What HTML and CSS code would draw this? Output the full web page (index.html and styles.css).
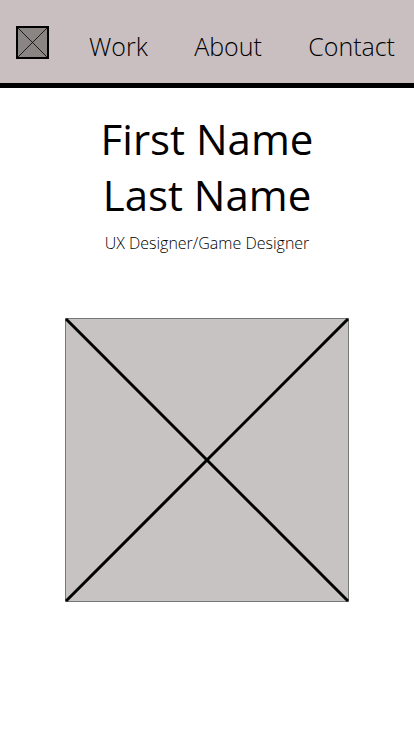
FILE: index.html
```html
<!DOCTYPE html>
<html lang="en">
<head>
  <meta charset="UTF-8">
  <meta name="viewport" content="width=device-width, initial-scale=1.0">
  <title>Portfolio</title>
  <link rel="stylesheet" href="styles.css">
</head>
<body>

<header class="top-bar">
  <a href="#" class="logo">
    <svg width="33" height="33" viewBox="0 0 33 33">
      <rect x="1" y="1" width="31" height="31" fill="#8a8482" stroke="#000" stroke-width="2"/>
      <line x1="2" y1="2" x2="31" y2="31" stroke="#000" stroke-width="0.8"/>
      <line x1="31" y1="2" x2="2" y2="31" stroke="#000" stroke-width="0.8"/>
    </svg>
  </a>
  <nav class="nav-links">
    <a href="#">Work</a>
    <a href="#">About</a>
    <a href="#">Contact</a>
  </nav>
</header>

<main class="intro">
  <h1 class="name">First Name<br>Last Name</h1>
  <p class="role">UX Designer/Game Designer</p>

  <div class="photo">
    <svg width="284" height="284" viewBox="0 0 284 284">
      <rect x="0.5" y="0.5" width="283" height="283" fill="#c8c3c3" stroke="#777" stroke-width="1"/>
      <line x1="1" y1="1" x2="283" y2="283" stroke="#000" stroke-width="3"/>
      <line x1="283" y1="1" x2="1" y2="283" stroke="#000" stroke-width="3"/>
    </svg>
  </div>
</main>

</body>
</html>
```

FILE: styles.css
```css
body {
  font-family: "Open Sans", "Noto Sans", sans-serif;
  background-color: #ffffff;
  color: #000;
  margin: 0;
  padding: 0;
}
.top-bar {
  display: flex;
  align-items: center;
  height: 81px;
  padding: 2px 19px 0 16px;
  background: #c9bfc0;
  border-bottom: 5px solid #000;
}
.logo {
  display: block;
  width: 33px;
  height: 33px;
  margin-right: 40px;
}
.logo svg {
  display: block;
}
.nav-links {
  flex: 1;
  display: flex;
  justify-content: space-between;
  padding-top: 6px;
}
.nav-links a {
  color: #000;
  text-decoration: none;
  font-size: 25px;
  font-weight: 300;
}
.intro {
  text-align: center;
  padding-top: 23px;
}
.name {
  margin: 0;
  font-size: 42px;
  font-weight: 400;
  line-height: 56px;
}
.role {
  margin: 10px 0 0;
  font-size: 16px;
  font-weight: 300;
  line-height: 20px;
}
.photo {
  margin-top: 65px;
  display: flex;
  justify-content: center;
}
.photo svg {
  display: block;
}
```
